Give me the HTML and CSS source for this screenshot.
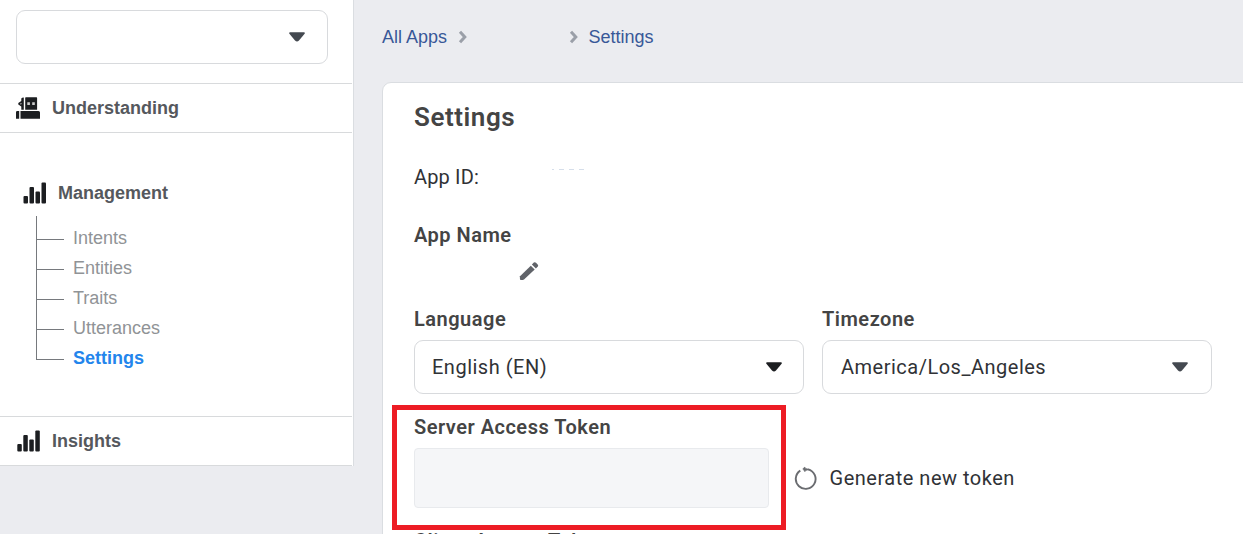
FILE: index.html
```html
<!DOCTYPE html>
<html lang="en">
<head>
<meta charset="utf-8">
<title>Settings</title>
<link rel="stylesheet" href="styles.css">
</head>
<body>
<div class="page">
  <aside class="sidebar">
    <div class="app-select">
      <svg class="caret" width="16" height="10" viewBox="0 0 16 10"><path d="M1.2 0.3h13.6q1.6 0 .8 1.5L10 8.5q-2 1.8-4 0L.4 1.8Q-.4.3 1.2.3z" fill="#444950"/></svg>
    </div>
    <div class="nav-row understanding">
      <svg width="24" height="22" viewBox="0 0 24 22" fill="#1c1e21">
        <path d="M9.800 .3h10.700q.6 0 .6.600v11.800H9.200V.9q0-.6.600-.6z"/>
        <path d="M5.300 1.500Q5.800.4 7.800.4v12.300H5.300V9.500L2.300 7.600V5.900l3-1.900z"/>
        <path d="M4.500 5.800l1.300 1-1.300 1z" fill="#ddd"/>
        <path d="M11.300 5.200h2.600v2.700h-2.600zM16.200 5.200h2.600v2.700h-2.600z" fill="#ccc"/>
        <path d="M0 15.300q0-1.200 1.200-1.200H3.200V21.700H0zM4.500 14H22.500q1.500 0 1.500 1.500v6.200H4.500z"/>
      </svg>
      <span>Understanding</span>
    </div>
    <div class="management">
      <div class="group-title">
        <svg width="24" height="22" viewBox="0 0 24 22" fill="#1c1e21"><rect x=".5" y="14" width="4.500" height="7.500" rx="1"/><rect x="6.500" y="5" width="4.500" height="16.500" rx="1"/><rect x="12.500" y="9.500" width="4.500" height="12" rx="1"/><rect x="18.500" y=".5" width="4.500" height="21" rx="1"/></svg>
        <span>Management</span>
      </div>
      <ul class="tree">
        <li>Intents</li>
        <li>Entities</li>
        <li>Traits</li>
        <li>Utterances</li>
        <li class="active">Settings</li>
      </ul>
    </div>
    <div class="nav-row insights">
      <svg width="24" height="22" viewBox="0 0 24 22" fill="#1c1e21"><rect x="1.300" y="14" width="4.500" height="7.500" rx="1"/><rect x="7.300" y="5" width="4.500" height="16.500" rx="1"/><rect x="13.300" y="9.500" width="4.500" height="12" rx="1"/><rect x="19.300" y=".5" width="4.500" height="21" rx="1"/></svg>
      <span>Insights</span>
    </div>
  </aside>
  <main class="main">
    <nav class="crumbs">
      <span>All Apps</span>
      <svg class="chev" width="10" height="14" viewBox="0 0 10 14"><path d="M2 1.800L6.800 7 2 12.200" fill="none" stroke="#9a9fa8" stroke-width="3"/></svg>
      <span class="blank-crumb"></span>
      <svg class="chev" width="10" height="14" viewBox="0 0 10 14"><path d="M2 1.800L6.800 7 2 12.200" fill="none" stroke="#9a9fa8" stroke-width="3"/></svg>
      <span>Settings</span>
    </nav>
    <section class="card">
      <h1>Settings</h1>
      <div class="app-id"><span>App ID:</span><span class="remnant"><i></i><i></i><i></i><i></i></span></div>
      <div class="label app-name">App Name</div>
      <div class="edit-row">
        <svg width="20" height="20" viewBox="0 0 20 20" fill="#606369"><path d="M1 15.200L11.800 4.700l3.900 3.900L5 18.600q-1 .6-3.700.5Q.6 17 1 15.200z"/><path d="M12.900 3.500l1.900-1.900q1.100-.9 2.200.1l1.700 1.700q1 1.100.1 2.200l-1.900 1.900z"/></svg>
      </div>
      <div class="fields">
        <div class="field">
          <div class="label">Language</div>
          <div class="select"><span>English (EN)</span><svg class="caret" width="16" height="10" viewBox="0 0 16 10"><path d="M1.200 .3h13.600q1.600 0 .8 1.500L10 8.500q-2 1.800-4 0L.4 1.800Q-.4.3 1.200.3z" fill="#1c1e21"/></svg></div>
        </div>
        <div class="field">
          <div class="label">Timezone</div>
          <div class="select zone"><span>America/Los_Angeles</span><svg class="caret" width="16" height="10" viewBox="0 0 16 10"><path d="M1.200 .3h13.600q1.600 0 .8 1.500L10 8.500q-2 1.800-4 0L.4 1.800Q-.4.3 1.200.3z" fill="#444950"/></svg></div>
        </div>
      </div>
      <div class="token">
        <div class="label">Server Access Token</div>
        <div class="token-row">
          <div class="token-box"></div>
          <svg class="refresh" width="24" height="24" viewBox="0 0 24 24"><path d="M6.300 4.600A9.900 9.900 0 1 0 14 3.300" fill="none" stroke="#6a6c70" stroke-width="1.900"/><path d="M8.800 2.800L11 1v1.200l4.500 1.200-4.500 1.300v1.100z" fill="#6a6c70" stroke="#6a6c70" stroke-width=".6"/></svg>
          <span>Generate new token</span>
        </div>
        <div class="highlight"></div>
      </div>
      <div class="label client">Client Access Token</div>
    </section>
  </main>
</div>
</body>
</html>
```

FILE: styles.css
```css
* { box-sizing: border-box; }
body { margin: 0; background: #ebecf0; overflow: hidden; }
svg { display: block; flex: none; }
.page { display: flex; height: 534px; overflow: hidden; }

.sidebar {
  width: 354px; height: 466px; flex: none;
  padding: 10px 1px 0 0;
  background: #fff; border-right: 1px solid #dadde1;
  font: 18px/30px "Liberation Sans", Arial, sans-serif;
}
.app-select {
  width: 312px; height: 54px; margin: 0 0 19px 16px; padding-right: 22px;
  display: flex; align-items: center; justify-content: flex-end;
  border: 1px solid #d8dadd; border-radius: 9px;
}
.nav-row {
  height: 50px; padding-left: 16px;
  display: flex; align-items: center; gap: 12px;
  border-top: 1px solid #d8dadc; border-bottom: 1px solid #d8dadc;
  font-weight: bold; color: #55585d;
}
.management { height: 283px; padding-top: 45px; }
.group-title {
  display: flex; align-items: center; gap: 11px; padding-left: 23px;
  font-weight: bold; color: #55585d;
}
.tree {
  list-style: none; margin: 8px 0 0 36px; padding: 8px 0 0;
  height: 144px; border-left: 1px solid #76797d; color: #909396;
}
.tree li { display: flex; height: 30px; align-items: center; gap: 9px; line-height: 28px; padding-bottom: 2px; }
.tree li::before { content: ""; width: 27px; height: 1px; margin-top: 2px; background: #76797d; }
.tree .active { color: #2385ec; font-weight: bold; }

.main { flex: 1; min-width: 0; padding-left: 28px; }
.crumbs {
  height: 82px; padding-top: 22px;
  display: flex; align-items: flex-start;
  font: 18px/30px "Liberation Sans", Arial, sans-serif; color: #385898;
}
.chev { margin: 8px 10px 0 11px; }
.chev + span:last-child { margin-left: -.6px; }
.blank-crumb { width: 80px; }
.card {
  width: 900px; height: 520px; padding: 19px 0 0 31px;
  background: #fff; border: 1px solid #dadde1; border-radius: 9px;
  font: 400 20px/30px Roboto, sans-serif; color: #303236; letter-spacing: .5px;
}
h1 { margin: 0 0 30px; font-size: 26px; line-height: 30px; font-weight: 600; color: #444; letter-spacing: .55px; }
.label { font-weight: 600; color: #444; letter-spacing: .5px; }
.app-id { display: flex; height: 30px; letter-spacing: .15px; }
.remnant { display: flex; gap: 5px; margin: 7px 0 0 73px; }
.remnant i { width: 5px; height: 1px; background: #d5deea; }
.remnant i:first-child { width: 2px; }
.app-name { margin-top: 28px; }
.edit-row { height: 36px; padding: 11px 0 0 105px; }
.fields { display: flex; gap: 18px; margin-top: 18px; }
.field { width: 390px; }
.select {
  height: 54px; margin-top: 6px; padding: 0 21px 0 17px;
  display: flex; align-items: center; justify-content: space-between;
  border: 1px solid #d8dadd; border-radius: 9px;
}
.zone { padding: 0 23px 0 18px; }
.token { position: relative; margin-top: 18px; }
.token-row { display: flex; align-items: center; margin-top: 6px; }
.token-box { width: 355px; height: 60px; background: #f5f6f8; border: 1px solid #e8eaed; border-radius: 4px; }
.refresh { margin: 0 12px 0 24.6px; }
.highlight { position: absolute; left: -22px; top: -7px; width: 394px; height: 125px; border: 5px solid #ed1c24; }
.client { margin-top: 18px; }
```
